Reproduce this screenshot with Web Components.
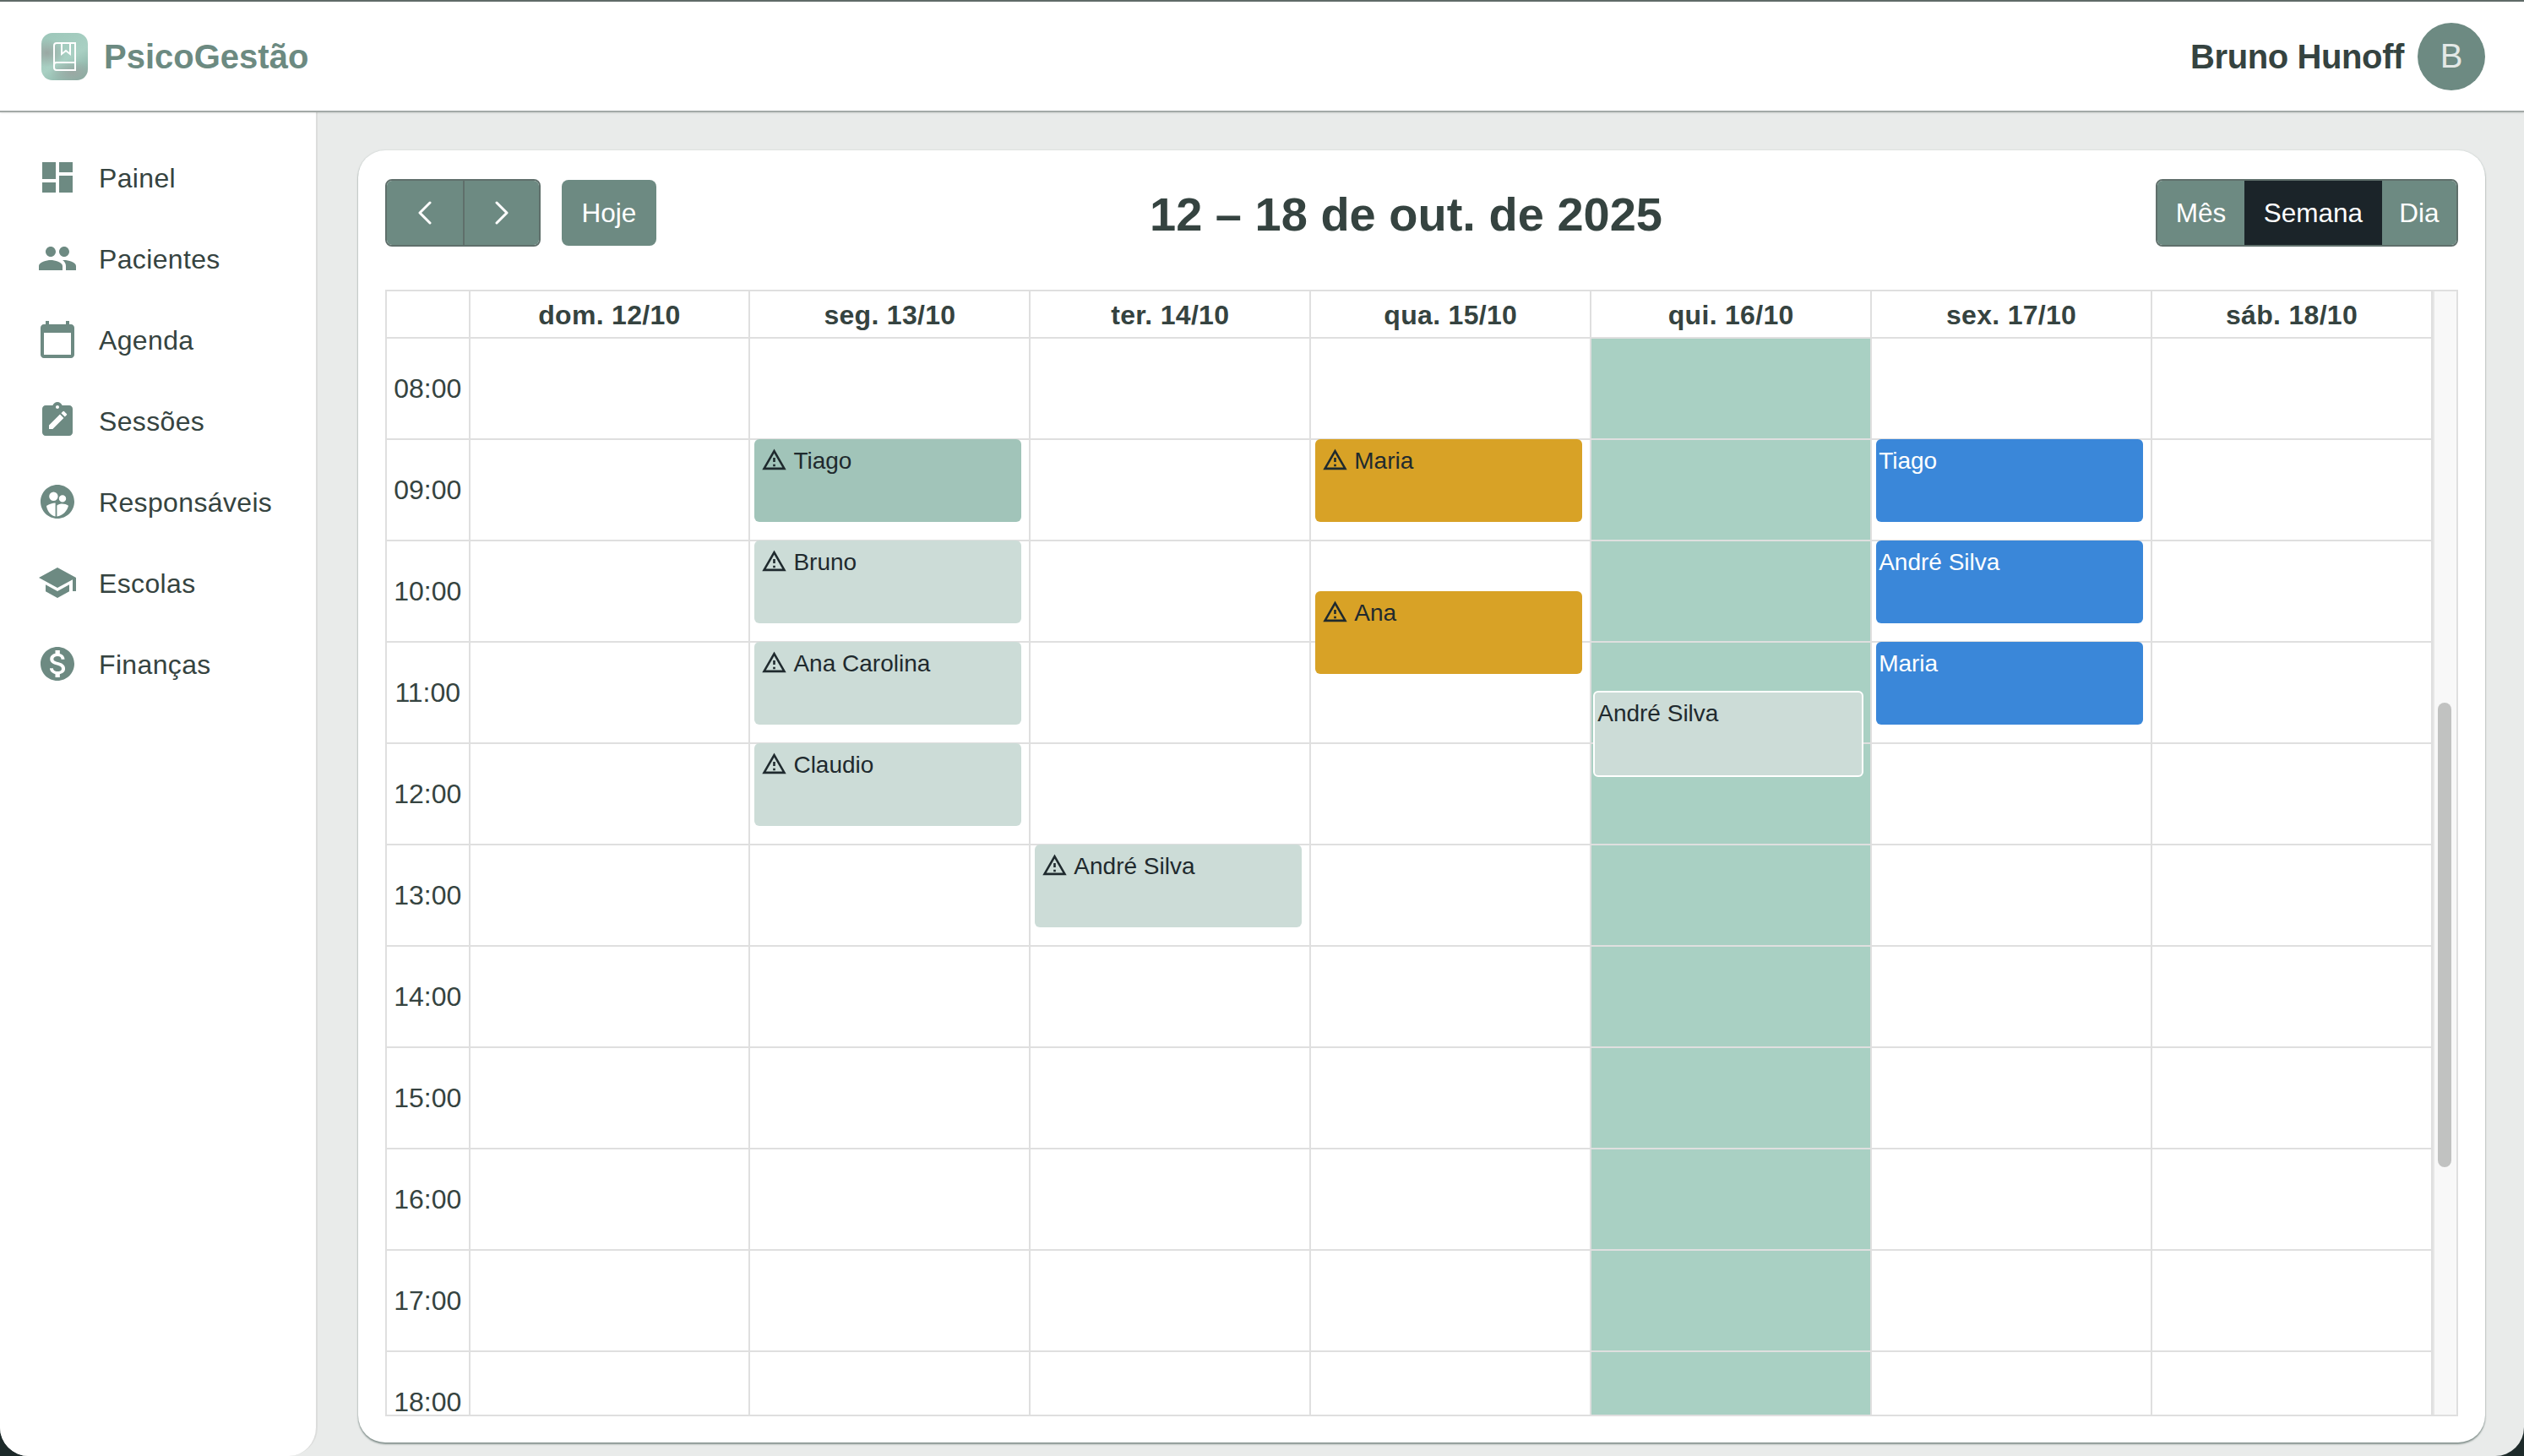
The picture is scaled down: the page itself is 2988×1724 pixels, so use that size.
<!DOCTYPE html>
<html lang="pt-BR">
<head>
<meta charset="utf-8">
<title>PsicoGestão</title>
<style>
  html, body { margin: 0; height: 100%; background: #1d2a2a; overflow: hidden; }
  body { font-family: "Liberation Sans", Arial, sans-serif; color: #354340; }
</style>
</head>
<body>
<app-shell>
  <app-header slot="header" user="Bruno Hunoff" initial="B"></app-header>
  <side-nav slot="nav">
    <nav-item icon="dashboard">Painel</nav-item>
    <nav-item icon="people">Pacientes</nav-item>
    <nav-item icon="calendar">Agenda</nav-item>
    <nav-item icon="session">Sessões</nav-item>
    <nav-item icon="family">Responsáveis</nav-item>
    <nav-item icon="school">Escolas</nav-item>
    <nav-item icon="money">Finanças</nav-item>
  </side-nav>
  <cal-card>
    <cal-toolbar>12 – 18 de out. de 2025</cal-toolbar>
    <week-grid>
      <cal-event slot="d1" start="9" color="strong" warn>Tiago</cal-event>
      <cal-event slot="d1" start="10" color="soft" warn>Bruno</cal-event>
      <cal-event slot="d1" start="11" color="soft" warn>Ana Carolina</cal-event>
      <cal-event slot="d1" start="12" color="soft" warn>Claudio</cal-event>
      <cal-event slot="d2" start="13" color="soft" warn>André Silva</cal-event>
      <cal-event slot="d3" start="9" color="gold" warn>Maria</cal-event>
      <cal-event slot="d3" start="10.5" color="gold" warn>Ana</cal-event>
      <cal-event slot="d4" start="11.5" color="soft" selected>André Silva</cal-event>
      <cal-event slot="d5" start="9" color="blue">Tiago</cal-event>
      <cal-event slot="d5" start="10" color="blue">André Silva</cal-event>
      <cal-event slot="d5" start="11" color="blue">Maria</cal-event>
    </week-grid>
  </cal-card>
</app-shell>

<script>
  // material style icons, all on a 24 unit box
  const ICONS = {
    dashboard: '<path d="M3 13h8V3H3v10zm0 8h8v-6H3v6zm10 0h8V11h-8v10zm0-18v6h8V3h-8z"/>',
    people: '<path d="M16 11c1.66 0 2.99-1.34 2.99-3S17.66 5 16 5c-1.66 0-3 1.34-3 3s1.34 3 3 3zm-8 0c1.66 0 2.99-1.34 2.99-3S9.66 5 8 5C6.34 5 5 6.34 5 8s1.34 3 3 3zm0 2c-2.33 0-7 1.17-7 3.5V19h14v-2.5c0-2.33-4.67-3.5-7-3.5zm8 0c-.29 0-.62.02-.97.05 1.16.84 1.97 1.97 1.97 3.45V19h6v-2.5c0-2.33-4.67-3.5-7-3.5z"/>',
    calendar: '<path d="M20 3h-1V1h-2v2H7V1H5v2H4c-1.1 0-2 .9-2 2v16c0 1.1.9 2 2 2h16c1.1 0 2-.9 2-2V5c0-1.1-.9-2-2-2zm0 18H4V8h16v13z"/>',
    session: '<path fill-rule="evenodd" d="M19 3h-4.18C14.4 1.84 13.3 1 12 1c-1.3 0-2.4.84-2.82 2H5c-1.1 0-2 .9-2 2v14c0 1.1.9 2 2 2h14c1.1 0 2-.9 2-2V5c0-1.1-.9-2-2-2zm-7 0c.55 0 1 .45 1 1s-.45 1-1 1-1-.45-1-1 .45-1 1-1zM7 17v-2.2l6.5-6.5 2.2 2.2L9.2 17H7zm9.4-7.2-2.2-2.2 1-1a.6.6 0 0 1 .85 0l1.35 1.35a.6.6 0 0 1 0 .85l-1 1z"/>',
    family: '<path fill-rule="evenodd" d="M12 2C6.48 2 2 6.48 2 12s4.48 10 10 10 10-4.48 10-10S17.52 2 12 2zM9.700 6.300a2.600 2.600 0 1 1 0 5.200 2.600 2.600 0 0 1 0-5.200zm5.300 1.800a2.100 2.100 0 1 1 0 4.200 2.100 2.100 0 0 1 0-4.200zM5.500 14.500c1.700-1 3.600-1.600 5.300-1.700v8C8 20.100 6 17.800 5.500 14.500zm6.200 6.300v-6.600c2-1.300 4.700-1.200 6.800.2-.7 3.200-3.400 5.900-6.800 6.400z"/>',
    school: '<path d="M5 13.18v4L12 21l7-3.82v-4L12 17l-7-3.82zM12 3 1 9l11 6 9-4.91V17h2V9L12 3z"/>',
    money: '<path d="M12 2C6.48 2 2 6.48 2 12s4.48 10 10 10 10-4.48 10-10S17.52 2 12 2zm1.41 16.09V20h-2.67v-1.93c-1.71-.36-3.16-1.46-3.27-3.4h1.96c.1 1.05.82 1.87 2.65 1.87 1.96 0 2.4-.98 2.4-1.59 0-.83-.44-1.61-2.67-2.14-2.48-.6-4.18-1.62-4.18-3.67 0-1.72 1.39-2.84 3.11-3.21V4h2.67v1.95c1.86.45 2.79 1.86 2.85 3.39H14.3c-.05-1.11-.64-1.87-2.22-1.87-1.5 0-2.4.68-2.4 1.64 0 .84.65 1.39 2.67 1.91s4.18 1.39 4.18 3.91c-.01 1.83-1.38 2.83-3.12 3.16z"/>',
    warn: '<path d="M12 5.99 19.53 19H4.47L12 5.99M12 2 1 21h22L12 2zm1 14h-2v2h2v-2zm0-6h-2v4h2v-4z"/>'
  };

  class AppShell extends HTMLElement {
    constructor() {
      super();
      this.attachShadow({mode: 'open'}).innerHTML = `
        <style>
          :host { display: grid; grid-template-columns: 376px 1fr; grid-template-rows: 131px 1fr; height: 100vh; background: #e9ebea; border-radius: 0 0 34px 34px; overflow: hidden; }
          .top { grid-column: 1 / -1; position: relative; z-index: 2; }
          main { display: flex; min-height: 0; min-width: 0; padding: 47px 46px 16px 48px; }
        </style>
        <div class="top"><slot name="header"></slot></div>
        <slot name="nav"></slot>
        <main><slot></slot></main>
      `;
    }
  }

  class AppHeader extends HTMLElement {
    constructor() {
      super();
      this.attachShadow({mode: 'open'}).innerHTML = `
        <style>
          :host { display: flex; align-items: center; justify-content: space-between; box-sizing: border-box; height: 133px; padding: 0 46px 0 49px; background: #fff; border-top: 2px solid #5f6b68; border-bottom: 2px solid #a3a9a7; box-shadow: 0 1px 2px rgba(0,0,0,.1); }
          .brand, .user { display: flex; align-items: center; }
          .brand { gap: 19px; font: bold 40px "Liberation Sans", Arial, sans-serif; color: #6c8a81; }
          .logo { width: 55px; height: 56px; border-radius: 13px; background:
            radial-gradient(ellipse 40% 30% at 12% 42%, #9aa8a3 0, rgba(154,168,163,0) 100%),
            radial-gradient(ellipse 50% 26% at 68% 84%, #9aa8a3 0, rgba(154,168,163,0) 100%),
            linear-gradient(150deg, #9cc6b9, #a9d0c3 55%, #7fa79b); }
          .logo svg { display: block; }
          .label { margin-top: 2px; }
          .user { gap: 16px; font: bold 40px "Liberation Sans", Arial, sans-serif; letter-spacing: -.4px; }
          .avatar { display: flex; align-items: center; justify-content: center; width: 80px; height: 80px; border-radius: 50%; background: #6d8a82; color: #e3e8e6; font-weight: normal; letter-spacing: 0; }
        </style>
        <div class="brand">
          <div class="logo">
            <svg width="56" height="56" viewBox="0 0 56 56" fill="none" stroke="#fff" stroke-width="2">
              <path d="M15 41V15a3 3 0 0 1 3-3h22v32H18a3 3 0 0 1-3-3zM15 38a3 3 0 0 1 3-3h22"/>
              <path d="M24 12v13l5-4 5 4V12"/>
            </svg>
          </div>
          <span class="label">PsicoGestão</span>
        </div>
        <div class="user">
          <span class="label">${this.getAttribute('user')}</span>
          <div class="avatar">${this.getAttribute('initial')}</div>
        </div>
      `;
    }
  }

  class SideNav extends HTMLElement {
    constructor() {
      super();
      this.attachShadow({mode: 'open'}).innerHTML = `
        <style>
          :host { display: flex; flex-direction: column; box-sizing: border-box; padding: 32px 0 0 44px; background: #fff; border-right: 2px solid #dcdddc; border-bottom-right-radius: 34px; }
        </style>
        <slot></slot>
      `;
    }
  }

  class NavItem extends HTMLElement {
    constructor() {
      super();
      this.attachShadow({mode: 'open'}).innerHTML = `
        <style>
          :host { display: flex; align-items: center; gap: 25px; height: 96px; font-size: 32px; letter-spacing: .35px; color: #354340; }
          svg { flex: none; width: 48px; height: 48px; margin-top: -2px; fill: #6d8a82; }
        </style>
        <svg viewBox="0 0 24 24">${ICONS[this.getAttribute('icon')]}</svg>
        <span><slot></slot></span>
      `;
    }
  }

  class CalCard extends HTMLElement {
    constructor() {
      super();
      this.attachShadow({mode: 'open'}).innerHTML = `
        <style>
          :host { display: flex; flex-direction: column; flex: 1; min-width: 0; box-sizing: border-box; gap: 51px; padding: 34px 32px 31px; background: #fff; border-radius: 32px; box-shadow: 0 2px 2px rgba(70,90,85,.6), 0 0 2px rgba(120,140,135,.35); }
        </style>
        <slot></slot>
      `;
    }
  }

  class CalToolbar extends HTMLElement {
    constructor() {
      super();
      this.attachShadow({mode: 'open'}).innerHTML = `
        <style>
          :host { display: flex; align-items: center; justify-content: space-between; height: 80px; flex: none; }
          .left { display: flex; gap: 25px; }
          .group { display: flex; height: 80px; box-sizing: border-box; border: 2px solid #5f6f6b; border-radius: 8px; overflow: hidden; }
          .btn { display: flex; align-items: center; justify-content: center; box-sizing: border-box; background: #6d8a82; color: #fff; font-size: 31.500px; }
          .arrow { width: 90px; }
          .arrow + .arrow { border-left: 2px solid #5f6f6b; }
          .hoje { width: 112px; height: 78px; margin-top: 1px; border-radius: 8px; }
          .mes { width: 103px; } .sem { width: 163px; background: #1b2429; } .dia { width: 88px; }
          svg { width: 16px; height: 28px; fill: none; stroke: #fff; stroke-width: 3; stroke-linecap: round; stroke-linejoin: round; }
          h2 { margin: 2px 0 0; font-size: 56px; font-weight: bold; color: #354340; }
        </style>
        <div class="left">
          <div class="group">
            <div class="btn arrow"><svg viewBox="0 0 16 28"><path d="M14 2 2 14l12 12"/></svg></div>
            <div class="btn arrow"><svg viewBox="0 0 16 28"><path d="M2 2l12 12L2 26"/></svg></div>
          </div>
          <div class="btn hoje">Hoje</div>
        </div>
        <h2><slot></slot></h2>
        <div class="group">
          <div class="btn mes">Mês</div>
          <div class="btn sem">Semana</div>
          <div class="btn dia">Dia</div>
        </div>
      `;
    }
  }

  class WeekGrid extends HTMLElement {
    constructor() {
      super();
      const days = ['dom. 12/10', 'seg. 13/10', 'ter. 14/10', 'qua. 15/10', 'qui. 16/10', 'sex. 17/10', 'sáb. 18/10'];
      const hours = ['08:00', '09:00', '10:00', '11:00', '12:00', '13:00', '14:00', '15:00', '16:00', '17:00', '18:00'];
      const todayIndex = 4;
      const slots = hours.map(() => '<div class="slot"></div>').join('');
      this.attachShadow({mode: 'open'}).innerHTML = `
        <style>
          :host { display: grid; grid-template-columns: 1fr 28px; grid-template-rows: 56px 1fr; flex: 1; min-height: 0; box-sizing: border-box; border: 2px solid #dfdfdf; font-size: 32px; color: #354340; }
          .cols { display: grid; grid-template-columns: 98.500px repeat(7, 1fr); }
          .head { border-bottom: 2px solid #dfdfdf; }
          .head > div { display: flex; align-items: center; justify-content: center; padding-top: 2px; font-weight: bold; letter-spacing: .3px; border-right: 2px solid #dfdfdf; }
          .body { grid-template-rows: minmax(0, 1fr); min-height: 0; }
          .time, .slot { box-sizing: border-box; height: 120px; border-bottom: 2px solid #dfdfdf; }
          .time { display: flex; align-items: center; justify-content: center; border-right: 2px solid #dfdfdf; }
          /* the 18:00 row is cut by the bottom of the grid */
          .time:last-child { height: 74px; align-items: flex-start; padding-top: 44px; line-height: 30px; border-bottom: 0; }
          .day { position: relative; overflow: hidden; border-right: 2px solid #dfdfdf; }
          .day.today { background: #a9d0c3; }
          .bar { grid-row: 1 / 3; grid-column: 2; display: flex; box-sizing: border-box; background: #f8f8f8; border-left: 2px solid #e6e6e6; padding-left: 4px; }
          .thumb { width: 16px; height: 550px; margin-top: 487px; border-radius: 8px; background: #c1c2c1; }
        </style>
        <div class="cols head">
          <div></div>
          ${days.map(d => `<div>${d}</div>`).join('')}
        </div>
        <div class="cols body">
          <div>${hours.map(h => `<div class="time">${h}</div>`).join('')}</div>
          ${days.map((d, i) => `<div class="day${i === todayIndex ? ' today' : ''}">${slots}<slot name="d${i}"></slot></div>`).join('')}
        </div>
        <div class="bar"><div class="thumb"></div></div>
      `;
    }
  }

  class CalEvent extends HTMLElement {
    constructor() {
      super();
      const colors = {
        strong: ['#a1c4b9', '#1f2a2e'],
        soft: ['#ccdcd7', '#1f2a2e'],
        gold: ['#d8a226', '#1f2a2e'],
        blue: ['#3a87d9', '#fff']
      };
      const [bg, fg] = colors[this.getAttribute('color')];
      const top = (parseFloat(this.getAttribute('start')) - 8) * 120 - 1;
      const selected = this.hasAttribute('selected');
      const warn = this.hasAttribute('warn');
      this.attachShadow({mode: 'open'}).innerHTML = `
        <style>
          :host { position: absolute; left: ${selected ? 2 : 4.5}px; right: ${selected ? 8 : 9.5}px; top: ${selected ? top - 2 : top}px; height: ${selected ? 102 : 98}px; box-sizing: border-box; display: flex; align-items: flex-start; gap: 7px; padding: ${selected ? '9px 0 0 3px' : '10px 0 0 ' + (warn ? 4 : 3.5) + 'px'}; background: ${bg}; color: ${fg}; border-radius: 6px; font-size: 28px; line-height: 32px; ${selected ? 'border: 2px solid #fff;' : ''} }
          svg { flex: none; width: 31px; height: 31px; margin: -1px 0 0 4.500px; fill: currentColor; }
        </style>
        ${warn ? `<svg viewBox="0 0 24 24">${ICONS.warn}</svg>` : ''}
        <span><slot></slot></span>
      `;
    }
  }

  customElements.define('app-shell', AppShell);
  customElements.define('app-header', AppHeader);
  customElements.define('side-nav', SideNav);
  customElements.define('nav-item', NavItem);
  customElements.define('cal-card', CalCard);
  customElements.define('cal-toolbar', CalToolbar);
  customElements.define('week-grid', WeekGrid);
  customElements.define('cal-event', CalEvent);
</script>
</body>
</html>
